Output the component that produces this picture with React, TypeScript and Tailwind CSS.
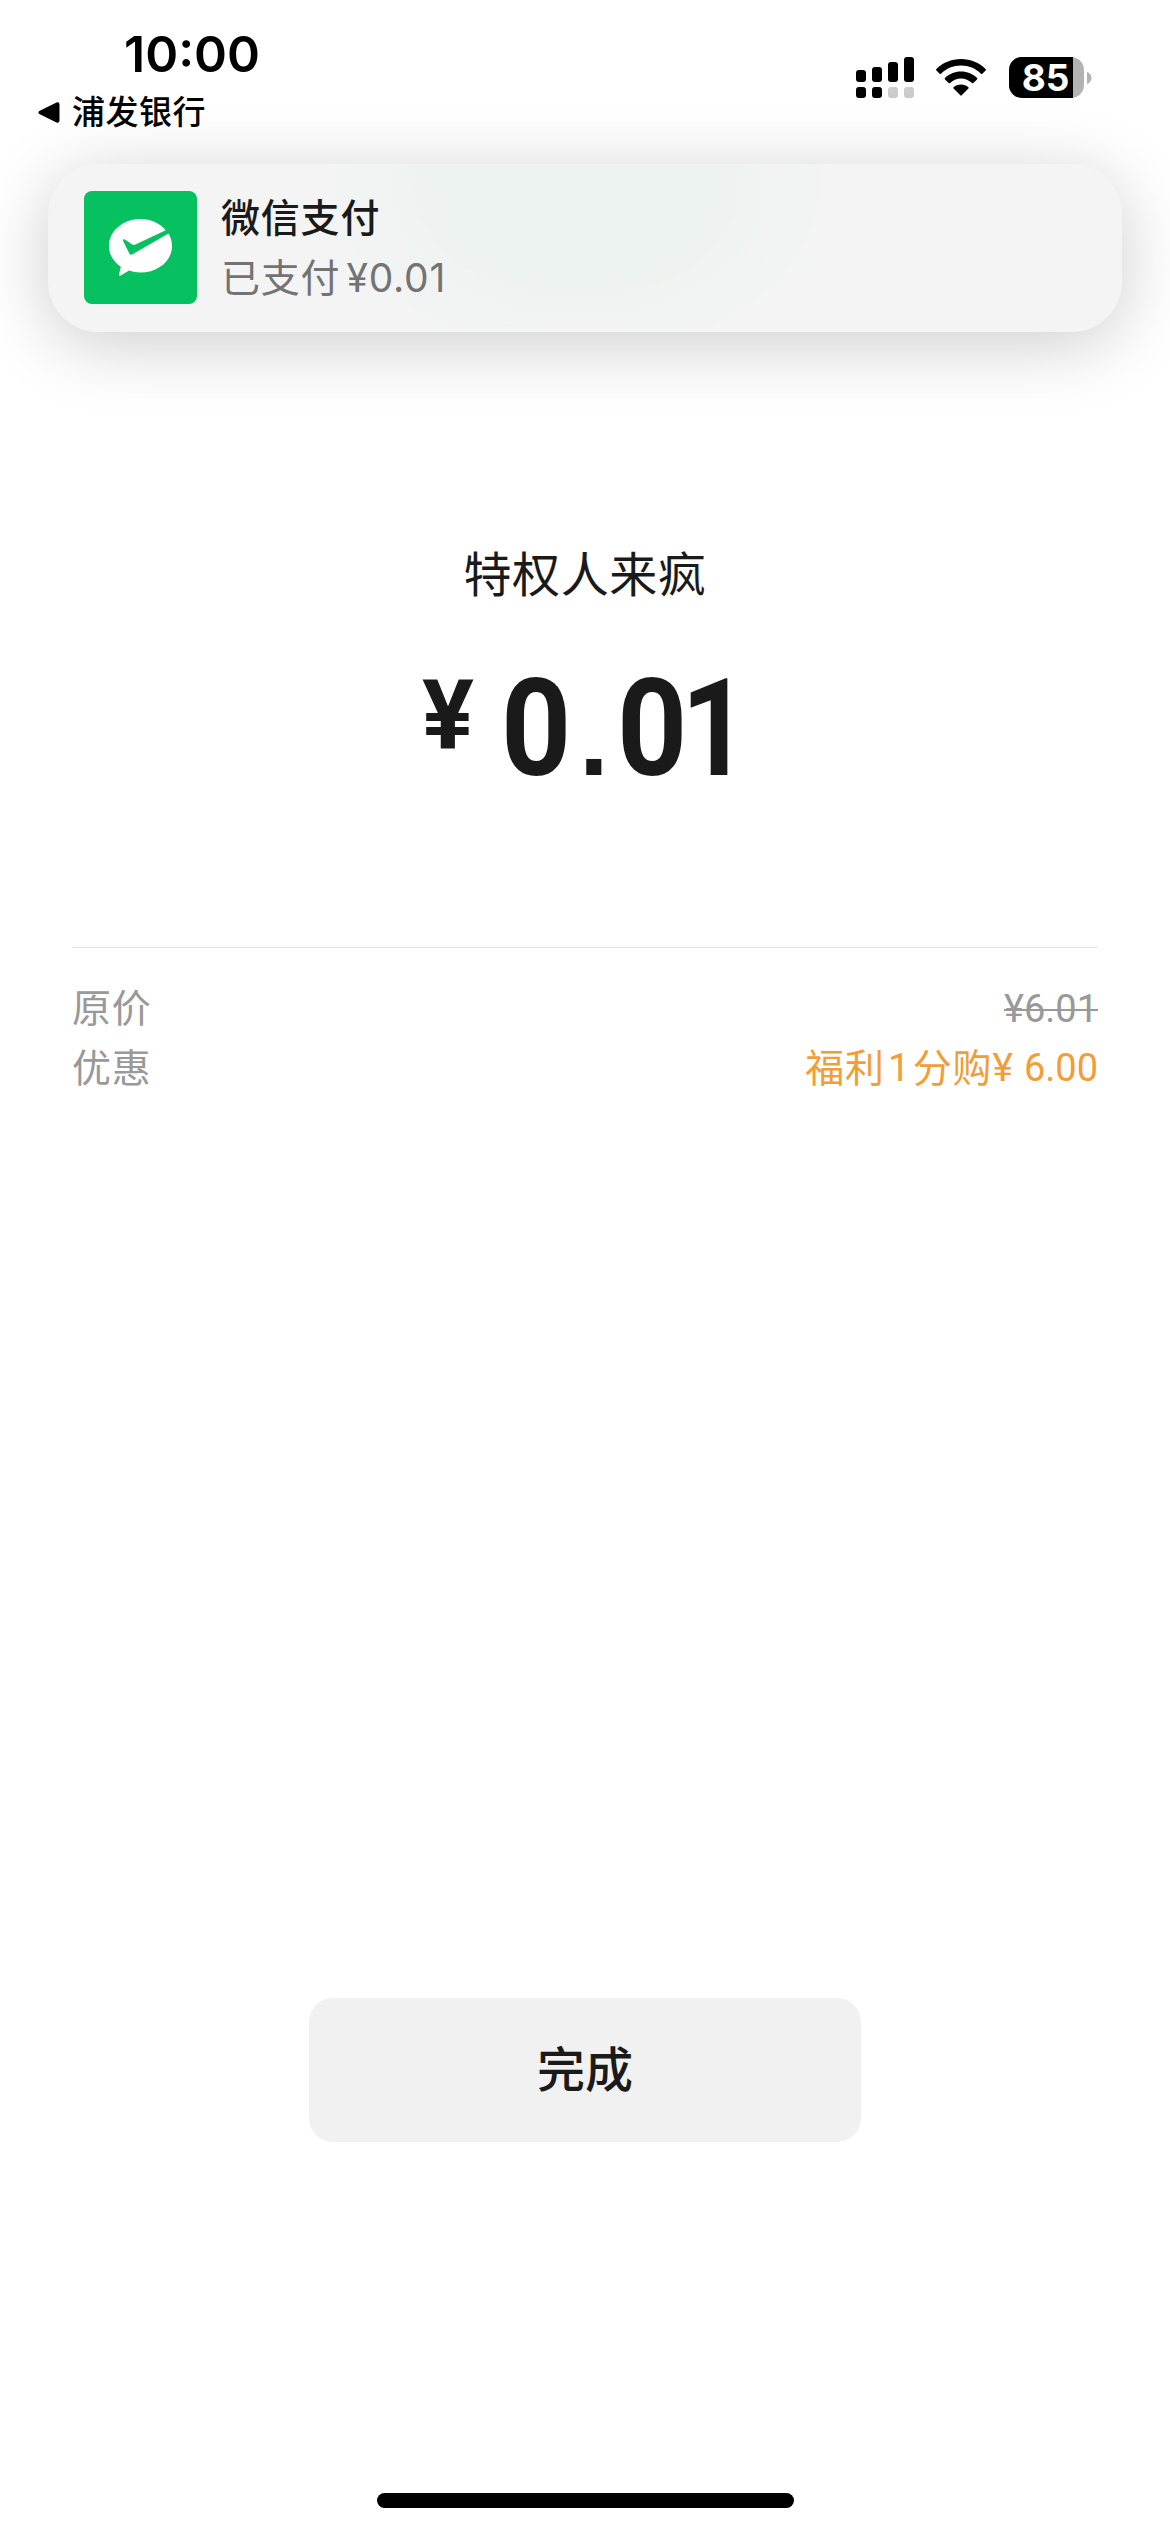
import type { ReactNode } from 'react';

const signalBars = [
  { bar: 'h-3', dot: 'bg-black' },
  { bar: 'h-[15px]', dot: 'bg-black' },
  { bar: 'h-5', dot: 'bg-[#cbcbcb]' },
  { bar: 'h-[25px]', dot: 'bg-[#cbcbcb]' },
];

function Signal() {
  return (
    <div className="flex h-[41px] items-end gap-1.5">
      {signalBars.map((item, i) => (
        <div key={i} className="flex flex-col gap-[5px]">
          <span className={`w-2.5 rounded-[3px] bg-black ${item.bar}`} />
          <span className={`h-[11px] w-2.5 rounded-[3px] ${item.dot}`} />
        </div>
      ))}
    </div>
  );
}

function Wifi() {
  return (
    <svg width="50" height="37" viewBox="0 0 50 37" fill="black">
      <path d="M25 0C34.6 0 43.400 3.800 49.600 10Q50.300 10.700 49.600 11.400L46.300 14.700Q45.600 15.400 44.900 14.700C39.700 9.500 32.700 6.600 25 6.600S10.300 9.500 5.100 14.700Q4.400 15.400 3.700 14.700L0.400 11.400Q-0.300 10.700 0.400 10C6.600 3.800 15.400 0 25 0Z" />
      <path d="M25 12.600C31.300 12.600 36.900 15 41.100 19.100Q41.700 19.800 41 20.500L37.300 24Q36.700 24.600 36 24C33.100 21.100 29.300 19.400 25 19.400S16.900 21.100 14 24Q13.300 24.600 12.700 24L9 20.500Q8.300 19.800 8.900 19.100C13.100 15 18.700 12.600 25 12.600Z" />
      <path d="M25 25.600C27.900 25.600 30.400 26.500 32.400 28.200Q33.100 28.900 32.400 29.600L25.700 36.300Q25 37 24.300 36.300L17.600 29.600Q16.900 28.900 17.600 28.200C19.600 26.500 22.100 25.600 25 25.600Z" />
    </svg>
  );
}

function Battery() {
  return (
    <div className="flex items-center gap-[3px]">
      <div className="flex h-[41px] w-[75px] items-center rounded-[13px] bg-[#b3b3b3]">
        <div className="flex h-full w-16 items-center justify-center rounded-l-[13px] bg-black pl-[9px]">
          <span className="text-[37px] leading-none font-bold text-white">85</span>
        </div>
      </div>
      <svg width="5" height="12" viewBox="0 0 5 12" fill="#b3b3b3">
        <path d="M0 0C3 1 4.500 3.500 4.500 6S3 11 0 12Z" />
      </svg>
    </div>
  );
}

function PayIcon() {
  return (
    <div className="h-[113px] w-[113px] shrink-0 rounded-lg bg-[#07c160]">
      <svg width="113" height="113" viewBox="0 0 113 113">
        <path
          fill="white"
          d="M56.500 28C39 28 25 40 25 55C25 63.500 29.500 71 36.800 75.800L35 83.500Q34.700 85.800 36.800 84.600L45 79.600C48.600 80.800 52.400 81.500 56.500 81.500C74 81.500 88 70 88 55C88 50.600 86.800 46.400 84.500 42.600L48.500 63.300C46.900 64.200 46 63.800 45.200 62.300L39.200 50.200C38.500 48.500 40 47.700 41.300 48.700L47.800 53.300C49 54 50 54.200 51.400 53.600L81.700 39.200C76 32.400 67 28 56.500 28Z"
        />
      </svg>
    </div>
  );
}

// Condensed digits, each in its own cell so the dot keeps its wide margins
function Amount() {
  return (
    <div className="flex h-[210px] w-[330px] items-start font-[Roboto,sans-serif] font-bold">
      <span className="w-[81px] pt-11 pl-0.5 text-[97px] leading-[120px]">¥</span>
      <span className="flex items-baseline pt-[38px] text-[136px] leading-[160px]">
        <span className="w-[78px] origin-left scale-x-[0.9]">0</span>
        <span className="w-[38px] font-['Liberation_Sans',sans-serif] text-[107px] leading-[120px]">.</span>
        <span className="w-[64px] origin-left scale-x-[0.9]">0</span>
        <span className="w-[65px] origin-left scale-x-[0.87]">1</span>
      </span>
    </div>
  );
}

function Row({ label, children }: { label: string; children: ReactNode }) {
  return (
    <div className="flex h-[60px] items-center justify-between text-[39px] leading-[60px]">
      <span className="tracking-[0.8px] text-[#999999]">{label}</span>
      {children}
    </div>
  );
}

export default function App() {
  return (
    <div className="flex h-[2532px] w-[1170px] flex-col overflow-hidden bg-white font-[Inter,'Noto_Sans_CJK_SC',sans-serif] text-[#1a1a1a]">
      {/* Status bar */}
      <header className="flex h-[164px] shrink-0 justify-between text-black">
        <div className="pt-6">
          <div className="pl-[124px] text-[50px] leading-[60px] font-semibold">10:00</div>
          <div className="flex items-center gap-3 pt-[5px] pl-[38px]">
            <svg width="22" height="21" viewBox="0 0 22 21">
              <path d="M1.300 8.900L18.500 0.600Q21.500 -0.400 21.500 2.500V18.500Q21.500 21.400 18.500 20.400L1.300 12Q-0.500 10.400 1.300 8.900Z" />
            </svg>
            <span className="text-[33px] leading-[46px] font-medium tracking-[0.5px]">浦发银行</span>
          </div>
        </div>
        <div className="flex items-start pt-[57px] pr-[78px]">
          <Signal />
          <div className="pt-0.5 pr-[23px] pl-[22px]">
            <Wifi />
          </div>
          <Battery />
        </div>
      </header>

      {/* Notification banner */}
      <section className="mx-12 flex h-[168px] shrink-0 items-center rounded-[50px] bg-[#f4f4f4] bg-[radial-gradient(ellipse_270px_190px_at_530px_20px,#edf3f0_0%,#edf3f0_50%,#f4f4f4_100%)] pb-px pl-9 shadow-[0_12px_72px_rgba(0,0,0,0.2)]">
        <PayIcon />
        <div className="pt-px pl-6">
          <p className="text-[39px] leading-[60px] font-medium tracking-[0.8px]">微信支付</p>
          <p className="flex text-[39px] leading-[60px] text-[#737373]">
            <span className="tracking-[0.8px]">已支付</span>
            <span className="pl-1.5 tracking-[0.8px]">¥0.01</span>
          </p>
        </div>
      </section>

      {/* Payee and amount */}
      <main className="flex grow flex-col items-center px-[72px]">
        <h1 className="mt-[207px] text-[48px] leading-[72px] tracking-[0.6px]">特权人来疯</h1>
        <Amount />

        <div className="mt-[126px] w-full border-t border-[#e2e2e2] pt-[30px]">
          <Row label="原价">
            <span className="pt-px font-[Roboto,sans-serif] text-[38px] text-[#999999] line-through decoration-2">¥6.01</span>
          </Row>
          <Row label="优惠">
            <span className="flex text-[#f29d38]">
              <span className="tracking-[0.8px]">福利</span>
              <span className="px-[3px] font-[Roboto,sans-serif]">1</span>
              <span className="tracking-[0.8px]">分购</span>
              <span className="font-[Roboto,sans-serif]">¥</span>
              <span className="pl-[11px] font-[Roboto,sans-serif] text-[38px]">6.00</span>
            </span>
          </Row>
        </div>

        <button className="mt-auto mb-[351px] h-36 w-[552px] rounded-3xl bg-[#f1f1f1] text-[48px] leading-[72px] font-medium">
          完成
        </button>
        <div className="mb-6 h-[15px] w-[417px] rounded-full bg-black" />
      </main>
    </div>
  );
}
